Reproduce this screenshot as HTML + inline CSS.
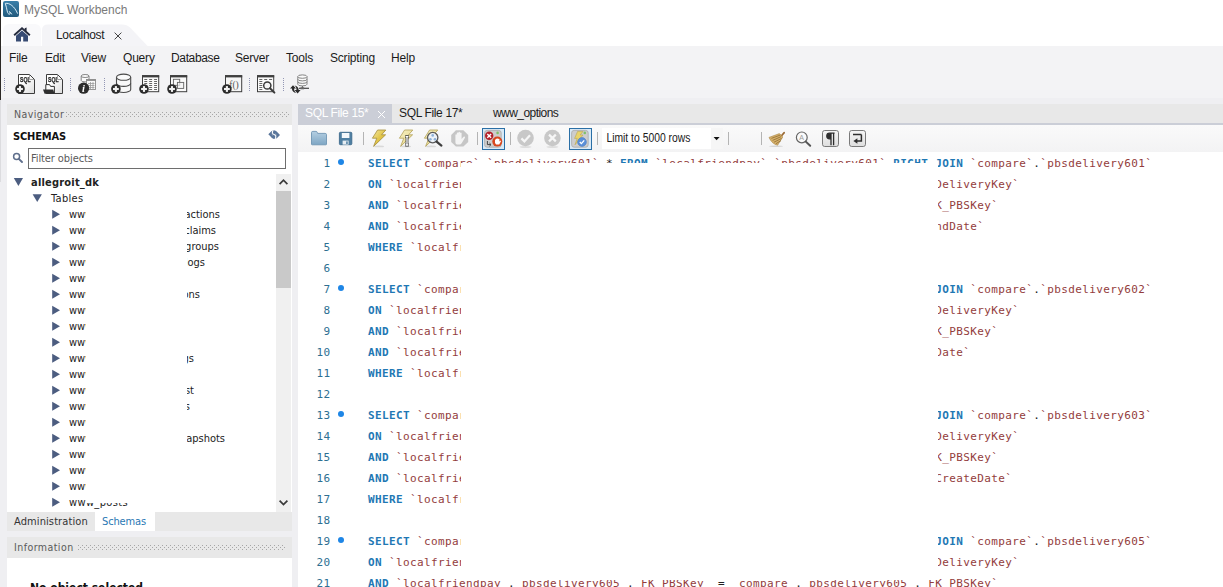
<!DOCTYPE html>
<html lang="en">
<head>
<meta charset="utf-8">
<title>MySQL Workbench</title>
<style>
*{box-sizing:border-box;margin:0;padding:0}
html,body{width:1223px;height:587px;overflow:hidden;background:#efeff2}
body{position:relative;font-family:"Liberation Sans",sans-serif;font-size:12px;color:#222}
.abs{position:absolute}
#titlebar{left:0;top:0;width:1223px;height:46px;background:#fff}
#edge{left:0;top:0;width:1px;height:100px;background:#2b2825}
#edge2{left:0;top:100px;width:1px;height:82px;background:#dcdcdf}
#applogo{left:3px;top:1px;width:16px;height:16px;background:linear-gradient(#3a7fa9,#225a7d);border-radius:2px}
#apptitle{left:24px;top:2px;font-size:12px;color:#7a7a7a;line-height:16px;white-space:nowrap}
#hometab{left:3px;top:24px;width:38px;height:22px;background:#f9f9fb;border-radius:6px 6px 0 0}
#conntab{left:42px;top:23px;width:100px;height:22px}
#conntxt{left:56px;top:27px;font-size:12px;color:#222;line-height:16px;white-space:nowrap;letter-spacing:-0.35px}
#menubar{left:1px;top:46px;width:1222px;height:54px;background:#f3f3f5}
.menu{top:50px;font-size:12px;line-height:16px;color:#1b1b1b;white-space:nowrap;letter-spacing:-0.2px}
#under{left:1px;top:98px;width:1222px;height:489px;background:#efeff2}
.phead{background:#e8e8e8;height:21px;color:#5a5a5a;font-family:"DejaVu Sans Condensed","Liberation Sans",sans-serif;font-size:10.5px;line-height:20px;letter-spacing:0.45px;padding-left:7px;white-space:nowrap}
.dots{position:absolute;top:8px;height:5px}
#nav{left:7px;top:104px;width:285px;height:408px;background:#fff}
#schemas{left:13px;top:130px;letter-spacing:-0.15px;font-weight:bold;font-size:11px;line-height:14px;color:#111;font-family:"DejaVu Sans Condensed","Liberation Sans",sans-serif}
#filter{left:28px;top:148px;width:258px;height:21px;border:1px solid #6e6e6e;background:#fff;font-size:11px;line-height:19px;padding-left:2px;color:#5a5a5a;letter-spacing:-0.1px;font-family:"DejaVu Sans Condensed","Liberation Sans",sans-serif}
.tree{font-family:"DejaVu Sans Condensed","Liberation Sans",sans-serif;font-size:11px;line-height:16px;color:#222;white-space:nowrap}
.tri-r{width:0;height:0;border-left:8.5px solid #4a5a7c;border-top:4.7px solid transparent;border-bottom:4.7px solid transparent}
.tri-d{width:0;height:0;border-top:8.5px solid #3f5478;border-left:4.7px solid transparent;border-right:4.7px solid transparent}
#vscroll{left:276px;top:174px;width:15px;height:338px;background:#f0f0f0}
#vthumb{left:276px;top:191px;width:15px;height:97px;background:#c9c9c9}
#navtabs{left:7px;top:512px;width:285px;height:19px;background:#e8e8e8}
#info{left:7px;top:537px;width:285px;height:50px;background:#fff}
#edtabs{left:298px;top:104px;width:925px;height:19px;background:#e8e8e8}
#edline{left:298px;top:123px;width:925px;height:2px;background:#cbced7}
#edtool{left:298px;top:125px;width:925px;height:27px;background:linear-gradient(#fafafa,#f3f3f4)}
#editor{left:298px;top:152px;width:925px;height:435px;background:#fff;overflow:hidden}
.etab{top:105px;font-size:12px;line-height:16px;color:#1c1c1c;white-space:nowrap;letter-spacing:-0.35px}
.ln{position:absolute;left:0;width:32.4px;text-align:right;color:#2d6f92}
.code,.ln{font-family:"DejaVu Sans Mono","Liberation Mono",monospace;font-size:11px;letter-spacing:0.378px;line-height:21px;white-space:pre;height:21px}
.code{position:absolute;left:70px;color:#933c3c}
.k{color:#1f78b4;font-weight:bold}
.o{color:#222}
.dot{position:absolute;left:40px;width:6px;height:6px;border-radius:50%;background:#1e86e6}
#redact{left:461px;top:163px;width:477px;height:417px;background:#fff}
#redact2{left:86px;top:206px;width:101px;height:297px;background:#fff}
</style>
</head>
<body>
<div id="titlebar" class="abs"></div>
<div id="menubar" class="abs"></div>
<div id="under" class="abs"></div>
<div id="edge" class="abs"></div>
<div id="edge2" class="abs"></div>

<!-- title -->
<div id="applogo" class="abs"></div>
<svg class="abs" style="left:3px;top:1px" width="16" height="16" viewBox="0 0 16 16"><path d="M2.3 2.4 C6.5 1.6 11.6 5.4 14.6 12.6 M2.3 2.4 C3.2 5 3.6 7.5 4.2 10 C4.6 12 5.4 13.5 6.6 13.2 C7.4 13 7 11.6 6.4 10.6 C7.6 11.6 8.4 12.4 8.8 13.4" fill="none" stroke="#d6ebf7" stroke-width="1"/></svg>
<div id="apptitle" class="abs">MySQL Workbench</div>

<!-- connection tabs -->
<div id="hometab" class="abs"></div>
<svg class="abs" style="left:42px;top:23.5px" width="110" height="22.5" viewBox="0 0 110 22" preserveAspectRatio="none"><path d="M0 22 V6 Q0 0.5 6 0.5 H80 Q85 0.5 88 3.5 L106 22 Z" fill="#f4f4f7"/></svg>
<svg class="abs" style="left:13px;top:26px" width="18" height="16" viewBox="0 0 18 16"><path d="M9 1 L0.5 8.5 L1.8 9.9 L9 3.6 L16.2 9.9 L17.5 8.5 L13.6 5 V1.6 L11.6 2.2 L11.8 3.4 Z" fill="#262c3e"/><path d="M3 9.7 L9 4.6 L15 9.7 V15.5 H10.2 V10.8 H8 V15.5 H3 Z" fill="#374b73"/></svg>
<div id="conntxt" class="abs">Localhost</div>
<svg class="abs" style="left:114px;top:32px" width="8" height="8" viewBox="0 0 8 8"><path d="M0.6 0.6 L7.4 7.4 M7.4 0.6 L0.6 7.4" stroke="#444" stroke-width="1" fill="none"/></svg>

<!-- menu -->
<div class="abs menu" style="left:9px">File</div>
<div class="abs menu" style="left:45px">Edit</div>
<div class="abs menu" style="left:81px">View</div>
<div class="abs menu" style="left:123px">Query</div>
<div class="abs menu" style="left:171px;letter-spacing:-0.35px">Database</div>
<div class="abs menu" style="left:235px">Server</div>
<div class="abs menu" style="left:286px">Tools</div>
<div class="abs menu" style="left:330px">Scripting</div>
<div class="abs menu" style="left:391px">Help</div>

<!-- TB-START -->
<svg class="abs" style="left:0;top:66px;opacity:0.999" width="320" height="34" viewBox="0 66 320 34" font-family="Liberation Sans, sans-serif">
<defs>
<linearGradient id="gdoc" x1="0" y1="0" x2="1" y2="1"><stop offset="0.35" stop-color="#ffffff"/><stop offset="1" stop-color="#dcdcdc"/></linearGradient>
<g id="plus"><circle r="4.8" fill="#2b2b2b"/><rect x="-2.9" y="-1.05" width="5.8" height="2.1" fill="#f2f2f2"/><rect x="-1.05" y="-2.9" width="2.1" height="5.8" fill="#f2f2f2"/></g>
<g id="vsep" fill="#9296b4"><rect y="78" width="1" height="1"/><rect y="80" width="1" height="1"/><rect y="82" width="1" height="1"/><rect y="84" width="1" height="1"/><rect y="86" width="1" height="1"/><rect y="88" width="1" height="1"/><rect y="90" width="1" height="1"/></g>
</defs>
<!-- left grip -->
<use href="#vsep" x="4"/>
<!-- new sql -->
<path d="M18.5 74.5 H29.5 L34.5 79.5 V93.5 H18.5 Z" fill="url(#gdoc)" stroke="#3c3c3c" stroke-width="1"/>
<path d="M29.5 74.8 V79.5 H34.2" fill="none" stroke="#8a8a8a" stroke-width="0.8"/>
<text x="20" y="82" font-size="7.4" font-weight="bold" fill="#222" stroke="#222" stroke-width="0.25" textLength="10.6" lengthAdjust="spacingAndGlyphs">SQL</text>
<use href="#plus" x="20" y="89"/>
<!-- open sql -->
<path d="M46.5 74.5 H57.5 L62.5 79.5 V93.5 H46.5 Z" fill="url(#gdoc)" stroke="#3c3c3c" stroke-width="1"/>
<path d="M57.5 74.8 V79.5 H62.2" fill="none" stroke="#8a8a8a" stroke-width="0.8"/>
<text x="48" y="82" font-size="7.4" font-weight="bold" fill="#222" stroke="#222" stroke-width="0.25" textLength="10.6" lengthAdjust="spacingAndGlyphs">SQL</text>
<path d="M45.8 93 V84.6 H49.6 L50.6 86.4 H54.4 V93 Z" fill="#fbfbfb" stroke="#2f2f2f" stroke-width="1"/>
<path d="M43 89.4 H53.2 L54.6 93.8 H44.6 Z" fill="#2f2f2f"/>
<use href="#vsep" x="70"/>
<!-- info -->
<path d="M81.2 76 V80.4 A3.9 1.5 0 0 0 89 80.4 V76" fill="#fafafa" stroke="#777" stroke-width="0.9"/>
<ellipse cx="85.1" cy="76" rx="3.9" ry="1.5" fill="#fafafa" stroke="#777" stroke-width="0.9"/>
<rect x="86.5" y="79.5" width="9" height="10" fill="#fafafa" stroke="#8a8a8a" stroke-width="0.9"/>
<rect x="86.5" y="79.5" width="9" height="1.4" fill="#8a8a8a"/>
<path d="M88 83.5h6.5M88 85.5h6.5M88 87.5h6.5M90.5 82v7.5M93 82v7.5" stroke="#9a9a9a" stroke-width="0.8" fill="none"/>
<circle cx="83.6" cy="88.2" r="5.6" fill="#2b2b2b"/>
<text x="81.9" y="92" font-family="Liberation Serif, serif" font-style="italic" font-weight="bold" font-size="10.5" fill="#ffffff">i</text>
<use href="#vsep" x="104"/>
<!-- create schema -->
<path d="M116.5 77.2 V89.4 A7.1 3.1 0 0 0 130.7 89.4 V77.2" fill="#f8f8f8" stroke="#4a4a4a" stroke-width="1.1"/>
<ellipse cx="123.6" cy="77.2" rx="7.1" ry="3.1" fill="#fbfbfb" stroke="#4a4a4a" stroke-width="1.1"/>
<path d="M116.5 83.3 A7.1 3.1 0 0 0 130.7 83.3" fill="none" stroke="#4a4a4a" stroke-width="1.1"/>
<use href="#plus" x="115.9" y="89"/>
<!-- create table -->
<rect x="142.5" y="75.7" width="16.2" height="16" fill="#fafafa" stroke="#3f3f3f" stroke-width="1"/>
<rect x="142" y="75.2" width="17.2" height="2.2" fill="#3f3f3f"/>
<path d="M144.3 79.5h2.9M149.2 79.5h2.9M154.1 79.5h2.9M144.3 81.5h2.9M149.2 81.5h2.9M154.1 81.5h2.9M144.3 83.5h2.9M149.2 83.5h2.9M154.1 83.5h2.9M144.3 85.5h2.9M149.2 85.5h2.9M154.1 85.5h2.9M149.2 87.5h2.9M154.1 87.5h2.9M149.2 89.5h2.9M154.1 89.5h2.9" stroke="#555" stroke-width="0.9" fill="none"/>
<use href="#plus" x="144" y="89"/>
<!-- create view -->
<rect x="170.5" y="75.7" width="16.2" height="16" fill="#fafafa" stroke="#3f3f3f" stroke-width="1"/>
<rect x="170" y="75.2" width="17.2" height="2.2" fill="#3f3f3f"/>
<rect x="173.4" y="79.3" width="6.3" height="6" fill="none" stroke="#666" stroke-width="0.9"/>
<rect x="177.4" y="82.4" width="6.3" height="6" fill="#f3f3f3" fill-opacity="0.7" stroke="#666" stroke-width="0.9"/>
<use href="#plus" x="172" y="89"/>
<!-- create routine -->
<rect x="225.5" y="75.7" width="16.2" height="16" fill="#f6f6f6" stroke="#3f3f3f" stroke-width="1"/>
<rect x="225" y="75.2" width="17.2" height="2.2" fill="#3f3f3f"/>
<text x="229.2" y="87.6" font-family="Liberation Serif, serif" font-size="9.5" fill="#555" textLength="9.6" lengthAdjust="spacingAndGlyphs">f()</text>
<use href="#plus" x="226.9" y="89"/>
<use href="#vsep" x="249"/>
<!-- search table data -->
<rect x="257.5" y="75.7" width="16.2" height="16" fill="#fafafa" stroke="#3f3f3f" stroke-width="1"/>
<rect x="257" y="75.2" width="17.2" height="2.2" fill="#3f3f3f"/>
<path d="M259.3 79.5h3M264.2 79.5h3M269.1 79.5h3M259.3 81.5h3M259.3 83.5h3M259.3 85.5h3M259.3 87.5h3M259.3 89.5h3" stroke="#555" stroke-width="0.9" fill="none"/>
<circle cx="267.3" cy="85.5" r="3.6" fill="#f4f4f4" stroke="#3a3a3a" stroke-width="1.5"/>
<path d="M270 88.3 L274.4 92.6" stroke="#3a3a3a" stroke-width="2" stroke-linecap="round"/>
<use href="#vsep" x="283"/>
<!-- reconnect -->
<path d="M297.8 76.6 V84.2 A4.6 1.7 0 0 0 307 84.2 V76.6" fill="#fafafa" stroke="#777" stroke-width="0.9"/>
<ellipse cx="302.4" cy="76.6" rx="4.6" ry="1.7" fill="#fafafa" stroke="#777" stroke-width="0.9"/>
<path d="M297.8 79.2 A4.6 1.7 0 0 0 307 79.2 M297.8 81.7 A4.6 1.7 0 0 0 307 81.7" fill="none" stroke="#777" stroke-width="0.9"/>
<path d="M302.4 86 V88" stroke="#666" stroke-width="1"/>
<path d="M299 88.3 H309" stroke="#444" stroke-width="1.2"/>
<rect x="300.5" y="87.3" width="3.6" height="2" fill="#666"/>
<path d="M290 88.6 L293 85.2 L296 88.6 H294.1 C294.1 90.6 294.8 92 296.2 93 C293.6 92.6 292 91 291.9 88.6 Z" fill="#2b2b2b"/>
<path d="M300.6 90 L297.6 93.6 L294.6 90 H296.5 C296.5 88 295.8 86.6 294.4 85.6 C297 86 298.6 87.6 298.7 90 Z" fill="#2b2b2b"/>
</svg>

<!-- TB-END -->

<!-- navigator -->
<div id="nav" class="abs">
  <div class="phead" style="position:relative">Navigator<svg class="dots" style="left:59px" width="224" height="5"><defs><pattern id="dp" width="4" height="4" patternUnits="userSpaceOnUse"><rect width="1" height="1" fill="#a6a6a6"/><rect x="2" y="2" width="1" height="1" fill="#a6a6a6"/></pattern></defs><rect width="224" height="5" fill="url(#dp)"/></svg></div>
</div>
<div id="schemas" class="abs">SCHEMAS</div>
<div id="filter" class="abs">Filter objects</div>
<div id="vscroll" class="abs"></div>
<div id="vthumb" class="abs"></div>
<svg class="abs" style="left:276px;top:174px" width="15" height="17" viewBox="0 0 15 17"><path d="M3.6 10.2 L7.5 6.2 L11.4 10.2" stroke="#3a3a3a" stroke-width="1.7" fill="none"/></svg>
<svg class="abs" style="left:276px;top:495px" width="15" height="17" viewBox="0 0 15 17"><path d="M3.6 5.6 L7.5 9.6 L11.4 5.6" stroke="#3a3a3a" stroke-width="1.7" fill="none"/></svg>
<svg class="abs" style="left:268px;top:130px" width="13" height="10" viewBox="0 0 13 10"><path d="M0.3 4.3 L3.4 1.2 Q5 -0.2 7 0.4 Q8.6 0.8 9.4 2.2 L12 5 L9 8 Q7.4 9.4 5.4 8.8 Q3.6 8.4 2.8 6.8 Z" fill="#5a769b"/><path d="M5.2 0.2 C3.6 2.6 4.6 4 6.1 4.6 C7.6 5.2 8.6 6.6 7 9.2" stroke="#fff" stroke-width="1.1" fill="none"/><path d="M4 3.2 L4.6 5.6 M8.2 6 L7.6 3.6" stroke="#fff" stroke-width="0.5" fill="none" opacity="0.6"/></svg>
<svg class="abs" style="left:12px;top:152px" width="12" height="12" viewBox="0 0 12 12"><circle cx="4.6" cy="4.6" r="3" fill="none" stroke="#5f6f8c" stroke-width="1.5"/><path d="M6.8 6.8 L10 10" stroke="#5f6f8c" stroke-width="1.9" stroke-linecap="round"/></svg>
<!-- TREE-START -->
<svg class="abs" style="left:0;top:174px" width="70" height="340" viewBox="0 174 70 340" fill="#4c5d80">
<polygon points="13.8,178 23,178 18.4,185.9"/><polygon points="32.6,194.2 41.9,194.2 37.25,201.9"/>
<polygon points="52.2,209.8 60,214.3 52.2,218.8"/>
<polygon points="52.2,225.8 60,230.3 52.2,234.8"/>
<polygon points="52.2,241.8 60,246.3 52.2,250.8"/>
<polygon points="52.2,257.8 60,262.3 52.2,266.8"/>
<polygon points="52.2,273.8 60,278.3 52.2,282.8"/>
<polygon points="52.2,289.8 60,294.3 52.2,298.8"/>
<polygon points="52.2,305.8 60,310.3 52.2,314.8"/>
<polygon points="52.2,321.8 60,326.3 52.2,330.8"/>
<polygon points="52.2,337.8 60,342.3 52.2,346.8"/>
<polygon points="52.2,353.8 60,358.3 52.2,362.8"/>
<polygon points="52.2,369.8 60,374.3 52.2,378.8"/>
<polygon points="52.2,385.8 60,390.3 52.2,394.8"/>
<polygon points="52.2,401.8 60,406.3 52.2,410.8"/>
<polygon points="52.2,417.8 60,422.3 52.2,426.8"/>
<polygon points="52.2,433.8 60,438.3 52.2,442.8"/>
<polygon points="52.2,449.8 60,454.3 52.2,458.8"/>
<polygon points="52.2,465.8 60,470.3 52.2,474.8"/>
<polygon points="52.2,481.8 60,486.3 52.2,490.8"/>
<polygon points="52.2,497.8 60,502.3 52.2,506.8"/>
</svg>
<div class="abs tree" style="left:31px;top:175px;font-weight:bold;letter-spacing:0.2px">allegroit_dk</div>
<div class="abs tree" style="left:51px;top:191px;letter-spacing:0.3px">Tables</div>
<div class="abs tree" style="left:69px;top:207px">www_actionscheduler</div>
<div class="abs tree" style="right:1003px;top:207px">_actions</div>
<div class="abs tree" style="left:69px;top:223px">www_actionscheduler</div>
<div class="abs tree" style="right:1007px;top:223px">_claims</div>
<div class="abs tree" style="left:69px;top:239px">www_actionscheduler</div>
<div class="abs tree" style="right:1004px;top:239px">_groups</div>
<div class="abs tree" style="left:69px;top:255px">www_actionscheduler</div>
<div class="abs tree" style="right:1018px;top:255px">_logs</div>
<div class="abs tree" style="left:69px;top:271px">www_commentmeta</div>
<div class="abs tree" style="left:69px;top:287px">www_wc_admin_notifi</div>
<div class="abs tree" style="right:1023px;top:287px">cations</div>
<div class="abs tree" style="left:69px;top:303px">www_comments</div>
<div class="abs tree" style="left:69px;top:319px">www_links</div>
<div class="abs tree" style="left:69px;top:335px">www_options</div>
<div class="abs tree" style="left:69px;top:351px">www_wc_download</div>
<div class="abs tree" style="right:1029px;top:351px">_logs</div>
<div class="abs tree" style="left:69px;top:367px">www_postmeta</div>
<div class="abs tree" style="left:69px;top:383px">www_wc_customer</div>
<div class="abs tree" style="right:1029px;top:383px">_list</div>
<div class="abs tree" style="left:69px;top:399px">www_wc_order_it</div>
<div class="abs tree" style="right:1033px;top:399px">ems</div>
<div class="abs tree" style="left:69px;top:415px">www_termmeta</div>
<div class="abs tree" style="left:69px;top:431px">www_wc_reports</div>
<div class="abs tree" style="right:998px;top:431px">_snapshots</div>
<div class="abs tree" style="left:69px;top:447px">www_terms</div>
<div class="abs tree" style="left:69px;top:463px">www_usermeta</div>
<div class="abs tree" style="left:69px;top:479px">www_users</div>
<div class="abs tree" style="left:69px;top:495px;letter-spacing:0.35px">www_posts</div>
<!-- TREE-END -->

<div id="navtabs" class="abs"></div>
<div class="abs" style="left:95px;top:512px;width:60px;height:19px;background:#fff"></div>
<div class="abs tree" style="left:14px;top:514px;color:#333;font-size:11px;letter-spacing:0.1px">Administration</div>
<div class="abs tree" style="left:102px;top:514px;color:#2a78b4;font-size:11px;letter-spacing:-0.15px">Schemas</div>

<div id="info" class="abs">
  <div class="phead" style="position:relative;line-height:20px;height:21px">Information<svg class="dots" style="left:71px;top:8px" width="208" height="5"><rect width="208" height="5" fill="url(#dp)"/></svg></div>
</div>

<div id="noobj" class="abs tree" style="left:30px;top:580px;font-weight:bold;color:#111;font-size:12px">No object selected</div>

<!-- editor -->
<div id="edtabs" class="abs"></div>
<div class="abs" style="left:298px;top:104px;width:94px;height:21px;background:#cbced7"></div>
<div class="abs etab" style="left:305px;color:#fff">SQL File 15*</div>
<svg class="abs" style="left:377px;top:110px" width="9" height="9" viewBox="0 0 9 9"><path d="M1 1 L8 8 M8 1 L1 8" stroke="#fff" stroke-width="1" fill="none"/></svg>
<div class="abs etab" style="left:399px">SQL File 17*</div>
<div class="abs etab" style="left:493px;letter-spacing:-0.55px">www_options</div>
<div id="edline" class="abs"></div>
<div id="edtool" class="abs"></div>
<!-- ED-START -->
<svg class="abs" style="left:298px;top:125px" width="600" height="27" viewBox="298 125 600 27" font-family="Liberation Sans, sans-serif">
<defs>
<linearGradient id="gfold" x1="0" y1="0" x2="0" y2="1"><stop offset="0" stop-color="#b5cfe2"/><stop offset="1" stop-color="#7ea6c4"/></linearGradient>
<linearGradient id="gbolt" x1="0" y1="0" x2="1" y2="1"><stop offset="0" stop-color="#f3e9a8"/><stop offset="0.5" stop-color="#e2c64a"/><stop offset="1" stop-color="#d1ae2e"/></linearGradient>
<linearGradient id="gbolt2" x1="0" y1="0" x2="1" y2="1"><stop offset="0" stop-color="#f6f0c6"/><stop offset="1" stop-color="#e6d682"/></linearGradient>
<linearGradient id="gbtn" x1="0" y1="0" x2="0" y2="1"><stop offset="0" stop-color="#f6f6f6"/><stop offset="1" stop-color="#dedede"/></linearGradient>
<path id="bolt" d="M5.6 0 H13.8 L9.6 4.8 H13.6 L1.6 16.4 L4.8 8.2 H0.4 Z"/>
<g id="esep"><rect y="132" width="1" height="13" fill="#b4b4b4"/></g>
</defs>
<!-- open -->
<path d="M311.5 144.2 V132.6 Q311.5 131.4 312.8 131.4 H316 Q317 131.4 317.3 132.4 L317.6 133.4 H325.2 Q326.5 133.4 326.5 134.7 V144.2 Q326.5 144.8 325.8 144.8 H312.2 Q311.5 144.8 311.5 144.2 Z" fill="url(#gfold)" stroke="#6f95b3" stroke-width="0.9"/>
<!-- save -->
<rect x="339.4" y="132.3" width="12.4" height="12.4" rx="1" fill="#4f7fa2" stroke="#3d6a8c" stroke-width="0.9"/>
<rect x="341.8" y="133" width="7.6" height="5" fill="#f4f8fb"/>
<rect x="342.6" y="140.6" width="6" height="4" fill="#e6edf2"/>
<rect x="346.2" y="141.4" width="1.5" height="2.6" fill="#4f7fa2"/>
<use href="#esep" x="363"/>
<!-- execute -->
<ellipse cx="379" cy="146.4" rx="5" ry="0.9" fill="#d9d9d9"/>
<use href="#bolt" x="372" y="130" fill="url(#gbolt)" stroke="#a38d3c" stroke-width="0.8"/>
<!-- execute current -->
<ellipse cx="406" cy="146.4" rx="5" ry="0.9" fill="#d9d9d9"/>
<use href="#bolt" x="399" y="130" fill="url(#gbolt2)" stroke="#b3a158" stroke-width="0.8"/>
<path d="M405.2 136.6 h3.6 M407 136.6 V145 M405.2 145 h3.6" stroke="#333" stroke-width="2.8" fill="none"/>
<path d="M405.6 136.6 h2.8 M407 136.6 V145 M405.6 145 h2.8" stroke="#ffffff" stroke-width="1.3" fill="none"/>
<!-- explain -->
<ellipse cx="431" cy="146.4" rx="5" ry="0.9" fill="#d9d9d9"/>
<use href="#bolt" x="424" y="130" fill="url(#gbolt2)" stroke="#b3a158" stroke-width="0.8"/>
<circle cx="432.7" cy="137.6" r="5.2" fill="#eef3f8" stroke="#5a5a5a" stroke-width="1.3"/>
<circle cx="432.7" cy="135.4" r="1.3" fill="#8fb2d8"/><circle cx="430.4" cy="139.2" r="1.3" fill="#8fb2d8"/><circle cx="435" cy="139.2" r="1.3" fill="#8fb2d8"/>
<path d="M436.6 141.6 L441.4 145.6" stroke="#3e3e3e" stroke-width="2.2" stroke-linecap="round"/>
<!-- stop -->
<path d="M455.9 130.2 H463.4 L468.2 135 V142 L463.4 146.6 H455.9 L451.2 142 V135 Z" fill="#c6c6c6"/>
<path d="M455.4 140.4 V135 Q455.4 134.2 456.1 134.2 Q456.8 134.2 456.8 135 V133.2 Q456.8 132.4 457.6 132.4 Q458.4 132.4 458.4 133.2 V132.6 Q458.4 131.8 459.2 131.8 Q460 131.8 460 132.6 V133.2 Q460 132.5 460.8 132.5 Q461.6 132.5 461.6 133.3 V139 L463.6 136.8 Q464.3 136.2 464.9 136.8 Q465.3 137.3 464.8 138 L461.8 143 Q461 144.6 459.4 144.6 H458 Q455.4 144.6 455.4 142 Z" fill="#f4f4f4"/>
<use href="#esep" x="477"/>
<!-- toggle stop on error -->
<rect x="482.5" y="128.5" width="22" height="21" fill="#d9e9f6" stroke="#2a6fa6" stroke-width="1"/>
<rect x="484.6" y="130.4" width="16.6" height="16.8" rx="2.5" fill="#cdcdcd" stroke="#a9a9a9" stroke-width="0.8"/>
<circle cx="497.6" cy="132.9" r="1.3" fill="#7fc06a"/>
<circle cx="489.2" cy="135.8" r="4.2" fill="#b3202a"/>
<path d="M487.3 133.9 L491.1 137.7 M491.1 133.9 L487.3 137.7" stroke="#fff" stroke-width="1.4"/>
<path d="M487.4 141 V144.6 H490.8 M489.4 143 L491 144.6 L489.4 146.2" stroke="#444" stroke-width="1" fill="none"/>
<circle cx="497.3" cy="141.6" r="5" fill="#d8481f"/>
<path d="M495 143 V139.6 H496 V138.8 H497.2 V138.6 H498.4 V139 H499.4 V141.4 L500.4 140.6 L501 141.2 L499.2 144.4 H496.2 Z" fill="#fff"/>
<use href="#esep" x="510"/>
<!-- commit -->
<ellipse cx="525.5" cy="147" rx="6" ry="0.9" fill="#dddddd"/>
<circle cx="525.5" cy="138" r="8.3" fill="#c8c8c8"/>
<path d="M521.4 138.4 L524.4 141.4 L530 135.2" stroke="#f6f6f6" stroke-width="2.2" fill="none"/>
<!-- rollback -->
<ellipse cx="552.4" cy="147" rx="6" ry="0.9" fill="#dddddd"/>
<circle cx="552.4" cy="138" r="8.3" fill="#c8c8c8"/>
<path d="M549 134.6 L555.8 141.4 M555.8 134.6 L549 141.4" stroke="#f6f6f6" stroke-width="2.2" fill="none"/>
<!-- toggle autocommit -->
<rect x="569.5" y="128.5" width="22" height="21" fill="#d9e9f6" stroke="#2a6fa6" stroke-width="1"/>
<rect x="571.6" y="130.4" width="16.6" height="16.8" rx="2.5" fill="#cdcdcd" stroke="#a9a9a9" stroke-width="0.8"/>
<circle cx="584.8" cy="132.9" r="1.3" fill="#7fc06a"/>
<path d="M577.6 131.4 H583 L580.2 135 H583 L575 144.8 L577.2 138.4 H574.6 Z" fill="#e9d46a" stroke="#b9a650" stroke-width="0.6"/>
<circle cx="582" cy="142" r="4.4" fill="#5a8fd8" stroke="#4a7cc2" stroke-width="0.6"/>
<path d="M579.8 142 L581.4 143.6 L584.2 140.4" stroke="#fff" stroke-width="1.3" fill="none"/>
<use href="#esep" x="597"/>
<!-- limit combo -->
<rect x="602" y="128" width="121" height="21" fill="#ffffff"/>
<rect x="711" y="128" width="12" height="21" fill="#f6f6f6"/>
<path d="M713.6 137 H719.6 L716.6 140.2 Z" fill="#111"/>
<text x="606.4" y="142.2" font-size="12" fill="#1a1a1a" textLength="84" lengthAdjust="spacingAndGlyphs">Limit to 5000 rows</text>
<use href="#esep" x="728"/>
<use href="#esep" x="761"/>
<!-- beautify (broom) -->
<ellipse cx="776" cy="146.2" rx="7" ry="0.8" fill="#d4d4d4"/>
<path d="M780.6 135.4 L783.6 132 Q784.6 131.4 785 132.4 Q785.2 133.2 784.4 133.8 L782 136.6 Z" fill="#9a6a34"/>
<path d="M769 137.4 L779.4 133.6 L782.8 137 L777.6 145.2 Q772 144 769 137.4 Z" fill="#d7b16a" stroke="#a88445" stroke-width="0.6"/>
<path d="M771.4 138.4 L780.4 135 M772.6 140.4 L781.2 136.6 M774 142.2 L781.6 138.4 M775.8 143.8 L781 140.6" stroke="#8f6c34" stroke-width="0.8" fill="none"/>
<!-- find -->
<circle cx="801.8" cy="137.4" r="5.4" fill="#fafafa" stroke="#666" stroke-width="1.2"/>
<text x="799.2" y="140.2" font-size="7" fill="#9a9a9a">A</text>
<path d="M805.8 141.6 L810.2 145.8" stroke="#555" stroke-width="2" stroke-linecap="round"/>
<!-- invisible chars -->
<rect x="822.5" y="130.5" width="16" height="16" rx="2.2" fill="url(#gbtn)" stroke="#7a7a7a" stroke-width="1"/>
<path d="M831 145.2 V133.2 M833.6 145.2 V133.2 M834.6 133.2 H829.6 A2.8 2.8 0 0 0 829.6 138.8 H831" stroke="#2e2e2e" stroke-width="1.3" fill="none"/>
<path d="M829.6 133.2 A2.8 2.8 0 0 0 829.6 138.8 H831 V133.2 Z" fill="#2e2e2e"/>
<!-- wrap -->
<rect x="849.5" y="130.5" width="16" height="16" rx="2.2" fill="url(#gbtn)" stroke="#7a7a7a" stroke-width="1"/>
<path d="M853 134.6 H861.4 M861.4 134.6 V141 H856" stroke="#2e2e2e" stroke-width="1.5" fill="none"/>
<path d="M853.4 141 L857.4 138.2 V143.8 Z" fill="#2e2e2e"/>
</svg>

<!-- ED-END -->
<div id="editor" class="abs">
<!-- CODE-START -->
<div class="ln" style="top:1px">1</div>
<div class="dot" style="top:7px"></div>
<div class="code" style="top:1px"><span class="k">SELECT</span> `compare`<span class="o">.</span>`pbsdelivery601`<span class="o">.</span><span class="o">*</span> <span class="k">FROM</span> `localfriendpay`<span class="o">.</span>`pbsdelivery601` <span class="k">RIGHT</span> <span class="k">JOIN</span> `compare`<span class="o">.</span>`pbsdelivery601`</div>
<div class="ln" style="top:22px">2</div>
<div class="code" style="top:22px"><span class="k">ON</span> `localfriendpay`<span class="o">.</span>`pbsdelivery601`<span class="o">.</span>`DeliveryKey` <span class="o">=</span> `compare`<span class="o">.</span>`pbsdelivery601`<span class="o">.</span>`DeliveryKey`</div>
<div class="ln" style="top:43px">3</div>
<div class="code" style="top:43px"><span class="k">AND</span> `localfriendpay`<span class="o">.</span>`pbsdelivery601`<span class="o">.</span>`FK_PBSKey` <span class="o">=</span> `compare`<span class="o">.</span>`pbsdelivery601`<span class="o">.</span>`FK_PBSKey`</div>
<div class="ln" style="top:64px">4</div>
<div class="code" style="top:64px"><span class="k">AND</span> `localfriendpay`<span class="o">.</span>`pbsdelivery601`<span class="o">.</span>`SendDate` <span class="o">=</span> `compare`<span class="o">.</span>`pbsdelivery601`<span class="o">.</span>`SendDate`</div>
<div class="ln" style="top:85px">5</div>
<div class="code" style="top:85px"><span class="k">WHERE</span> `localfriendpay`<span class="o">.</span>`pbsdelivery601`<span class="o">.</span>`DeliveryKey` <span class="k">IS</span> <span class="k">NULL</span><span class="o">;</span></div>
<div class="ln" style="top:106px">6</div>
<div class="ln" style="top:127px">7</div>
<div class="dot" style="top:133px"></div>
<div class="code" style="top:127px"><span class="k">SELECT</span> `compare`<span class="o">.</span>`pbsdelivery602`<span class="o">.</span><span class="o">*</span> <span class="k">FROM</span> `localfriendpay`<span class="o">.</span>`pbsdelivery602` <span class="k">RIGHT</span> <span class="k">JOIN</span> `compare`<span class="o">.</span>`pbsdelivery602`</div>
<div class="ln" style="top:148px">8</div>
<div class="code" style="top:148px"><span class="k">ON</span> `localfriendpay`<span class="o">.</span>`pbsdelivery602`<span class="o">.</span>`DeliveryKey` <span class="o">=</span> `compare`<span class="o">.</span>`pbsdelivery602`<span class="o">.</span>`DeliveryKey`</div>
<div class="ln" style="top:169px">9</div>
<div class="code" style="top:169px"><span class="k">AND</span> `localfriendpay`<span class="o">.</span>`pbsdelivery602`<span class="o">.</span>`FK_PBSKey` <span class="o">=</span> `compare`<span class="o">.</span>`pbsdelivery602`<span class="o">.</span>`FK_PBSKey`</div>
<div class="ln" style="top:190px">10</div>
<div class="code" style="top:190px"><span class="k">AND</span> `localfriendpay`<span class="o">.</span>`pbsdelivery602`<span class="o">.</span>`DueDate` <span class="o">=</span> `compare`<span class="o">.</span>`pbsdelivery602`<span class="o">.</span>`DueDate`</div>
<div class="ln" style="top:211px">11</div>
<div class="code" style="top:211px"><span class="k">WHERE</span> `localfriendpay`<span class="o">.</span>`pbsdelivery602`<span class="o">.</span>`DeliveryKey` <span class="k">IS</span> <span class="k">NULL</span><span class="o">;</span></div>
<div class="ln" style="top:232px">12</div>
<div class="ln" style="top:253px">13</div>
<div class="dot" style="top:259px"></div>
<div class="code" style="top:253px"><span class="k">SELECT</span> `compare`<span class="o">.</span>`pbsdelivery603`<span class="o">.</span><span class="o">*</span> <span class="k">FROM</span> `localfriendpay`<span class="o">.</span>`pbsdelivery603` <span class="k">RIGHT</span> <span class="k">JOIN</span> `compare`<span class="o">.</span>`pbsdelivery603`</div>
<div class="ln" style="top:274px">14</div>
<div class="code" style="top:274px"><span class="k">ON</span> `localfriendpay`<span class="o">.</span>`pbsdelivery603`<span class="o">.</span>`DeliveryKey` <span class="o">=</span> `compare`<span class="o">.</span>`pbsdelivery603`<span class="o">.</span>`DeliveryKey`</div>
<div class="ln" style="top:295px">15</div>
<div class="code" style="top:295px"><span class="k">AND</span> `localfriendpay`<span class="o">.</span>`pbsdelivery603`<span class="o">.</span>`FK_PBSKey` <span class="o">=</span> `compare`<span class="o">.</span>`pbsdelivery603`<span class="o">.</span>`FK_PBSKey`</div>
<div class="ln" style="top:316px">16</div>
<div class="code" style="top:316px"><span class="k">AND</span> `localfriendpay`<span class="o">.</span>`pbsdelivery603`<span class="o">.</span>`CreateDate` <span class="o">=</span> `compare`<span class="o">.</span>`pbsdelivery603`<span class="o">.</span>`CreateDate`</div>
<div class="ln" style="top:337px">17</div>
<div class="code" style="top:337px"><span class="k">WHERE</span> `localfriendpay`<span class="o">.</span>`pbsdelivery603`<span class="o">.</span>`DeliveryKey` <span class="k">IS</span> <span class="k">NULL</span><span class="o">;</span></div>
<div class="ln" style="top:358px">18</div>
<div class="ln" style="top:379px">19</div>
<div class="dot" style="top:385px"></div>
<div class="code" style="top:379px"><span class="k">SELECT</span> `compare`<span class="o">.</span>`pbsdelivery605`<span class="o">.</span><span class="o">*</span> <span class="k">FROM</span> `localfriendpay`<span class="o">.</span>`pbsdelivery605` <span class="k">RIGHT</span> <span class="k">JOIN</span> `compare`<span class="o">.</span>`pbsdelivery605`</div>
<div class="ln" style="top:400px">20</div>
<div class="code" style="top:400px"><span class="k">ON</span> `localfriendpay`<span class="o">.</span>`pbsdelivery605`<span class="o">.</span>`DeliveryKey` <span class="o">=</span> `compare`<span class="o">.</span>`pbsdelivery605`<span class="o">.</span>`DeliveryKey`</div>
<div class="ln" style="top:421px">21</div>
<div class="code" style="top:421px"><span class="k">AND</span> `localfriendpay`<span class="o">.</span>`pbsdelivery605`<span class="o">.</span>`FK_PBSKey` <span class="o">=</span> `compare`<span class="o">.</span>`pbsdelivery605`<span class="o">.</span>`FK_PBSKey`</div>
<!-- CODE-END -->
</div>
<div id="redact" class="abs"></div>
<div id="redact2" class="abs"></div>
</body>
</html>
